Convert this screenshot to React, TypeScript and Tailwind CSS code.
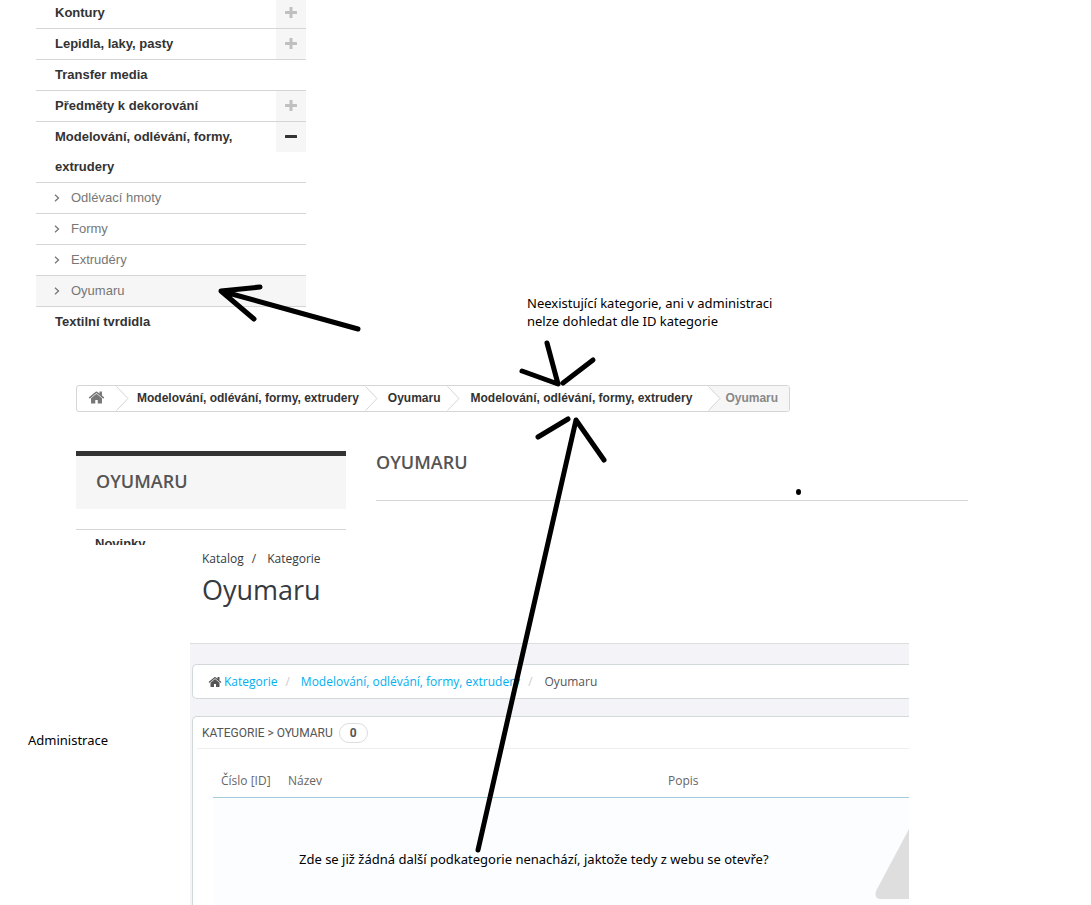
import React from 'react';
import { clsx } from 'clsx';

type Category = { name: string; toggle?: 'plus' | 'minus' };

const categories: Category[] = [
  { name: 'Kontury', toggle: 'plus' },
  { name: 'Lepidla, laky, pasty', toggle: 'plus' },
  { name: 'Transfer media' },
  { name: 'Předměty k dekorování', toggle: 'plus' },
];

const subcategories = ['Odlévací hmoty', 'Formy', 'Extrudéry', 'Oyumaru'];

const HomeIcon: React.FC<{ className?: string }> = ({ className }) => (
  <svg viewBox="0 0 1792 1792" fill="currentColor" className={className} aria-hidden="true">
    <path d="M1472 992v480q0 26-19 45t-45 19h-384v-384h-256v384h-384q-26 0-45-19t-19-45v-480q0-1 .5-3t.5-3l575-474 575 474q1 2 1 6zm223-69l-62 74q-8 9-21 11h-3q-13 0-21-7l-692-577-692 577q-12 8-24 7-13-2-21-11l-62-74q-8-10-7-23.5t11-21.5l719-599q32-26 76-26t76 26l244 204v-195q0-14 9-23t23-9h192q14 0 23 9t9 23v408l219 182q10 8 11 21.5t-7 23.5z" />
  </svg>
);

const ToggleButton: React.FC<{ kind: 'plus' | 'minus' }> = ({ kind }) => (
  <button
    type="button"
    aria-label={kind === 'plus' ? 'Rozbalit' : 'Sbalit'}
    className={clsx(
      'flex size-[30px] shrink-0 items-center justify-center bg-[#f6f6f6]',
      kind === 'plus' ? 'text-[#c0c0c0]' : 'text-[#333333]'
    )}
  >
    <svg viewBox="0 0 12 12" fill="currentColor" className="size-3" aria-hidden="true">
      <rect x="0" y="4" width="12" height="3" rx="0.5" />
      {kind === 'plus' && <rect x="4.5" y="0" width="3" height="11" rx="0.5" />}
    </svg>
  </button>
);

const CategoryRow: React.FC<Category> = ({ name, toggle }) => (
  <div className="flex items-start justify-between">
    <a href="#" className="block max-w-[220px] pl-[19px] font-bold text-[#333333]">{name}</a>
    {toggle && <ToggleButton kind={toggle} />}
  </div>
);

const Sidebar: React.FC = () => (
  <nav className="-mt-0.5 ml-9 w-[270px] text-[13px] leading-[30px]">
    <ul>
      {categories.map((category) => (
        <li key={category.name} className="border-b border-[#d6d4d4]">
          <CategoryRow {...category} />
        </li>
      ))}
      <li>
        <CategoryRow name="Modelování, odlévání, formy, extrudery" toggle="minus" />
        <ul className="border-b border-[#d6d4d4]">
          {subcategories.map((name) => (
            <li key={name} className={clsx('border-t border-[#d6d4d4]', name === 'Oyumaru' && 'bg-[#f6f6f6]')}>
              <a href="#" className="flex items-center gap-[11px] pl-[18px] text-[#777777]">
                <svg viewBox="0 0 6 8" className="h-2 w-1.5" fill="none" stroke="currentColor" strokeWidth="1.3" aria-hidden="true">
                  <path d="M1 0.8 4.5 4 1 7.2" />
                </svg>
                {name}
              </a>
            </li>
          ))}
        </ul>
      </li>
      <li>
        <CategoryRow name="Textilní tvrdidla" />
      </li>
    </ul>
  </nav>
);

const CrumbArrow: React.FC = () => (
  <svg viewBox="0 0 13 25" className="h-[25px] w-[13px] shrink-0" aria-hidden="true">
    <path d="M0 0 12 12.5 0 25Z" fill="#ffffff" />
    <path d="M0.5 0.5 12 12.5 0.5 24.5" fill="none" stroke="#d6d4d4" />
  </svg>
);

const ShopBreadcrumb: React.FC = () => (
  <nav className="mt-12 ml-[76px] flex w-fit overflow-hidden rounded-[3px] border border-[#d6d4d4] text-[12px] leading-[25px] font-bold whitespace-nowrap text-[#333333]">
    <a href="#" aria-label="Domů" className="flex h-[22px] items-center px-[11px] text-[#777777]">
      <HomeIcon className="size-[17px]" />
    </a>
    <CrumbArrow />
    <a href="#" className="pr-1.5 pl-2">Modelování, odlévání, formy, extrudery</a>
    <CrumbArrow />
    <a href="#" className="pr-1.5 pl-2.5">Oyumaru</a>
    <CrumbArrow />
    <a href="#" className="pr-4 pl-[11px]">Modelování, odlévání, formy, extrudery</a>
    <span className="flex bg-[#f6f6f6] pr-[11px] text-[#888888]">
      <CrumbArrow />
      <span className="pl-1">Oyumaru</span>
    </span>
  </nav>
);

const ShopContent: React.FC = () => (
  <div className="mt-[39px] flex h-[94px] items-start gap-[30px] overflow-hidden pr-[123px] pl-[76px]">
    <aside className="w-[270px] shrink-0">
      <h2 className="border-t-[5px] border-[#333333] bg-[#f6f6f6] px-5 pb-0.5 font-['Open_Sans',sans-serif] text-[18px] leading-[51px] font-semibold text-[#555454]">
        OYUMARU
      </h2>
      <div className="mt-5 border-t border-[#d6d4d4] pl-[19px] text-[13px] leading-7 font-bold text-[#333333]">
        <a href="#">Novinky</a>
      </div>
    </aside>
    <h1 className="grow border-b border-[#d6d4d4] pb-[27px] font-['Open_Sans',sans-serif] text-[18px] leading-[22px] font-semibold text-[#555454]">
      OYUMARU
    </h1>
  </div>
);

const AdminPanel: React.FC = () => (
  <section className="mr-[182px] ml-[190px] overflow-hidden font-['Open_Sans',sans-serif] text-[12px] text-[#666666]">
    <header className="h-[98px] pt-1 pl-3 text-[#363a41]">
      <div className="flex leading-5">
        <a href="#">Katalog</a>
        <span className="px-2">/</span>
        <a href="#" className="pl-[3px]">Kategorie</a>
      </div>
      <h2 className="text-[27px] leading-[42px]">Oyumaru</h2>
    </header>

    <div className="border-t border-[#dddddd] bg-[#f4f3f8] pt-5 pl-0.5">
      <nav className="flex h-[35px] items-center rounded-l-[5px] border border-r-0 border-[#d3d8db] bg-white pl-[15px] text-[#00aff0]">
        <HomeIcon className="size-3.5 text-[#555555]" />
        <a href="#" className="pl-0.5">Kategorie</a>
        <span className="px-2 text-[#cccccc]">/</span>
        <a href="#" className="pl-[3px]">Modelování, odlévání, formy, extrudery</a>
        <span className="px-2 text-[#cccccc]">/</span>
        <span className="pl-1 text-[#555555]">Oyumaru</span>
      </nav>

      <div className="relative mt-[17px] rounded-tl-[5px] border-t border-l border-[#d3d8db] bg-white">
        <h3 className="ml-1 flex h-8 items-center gap-1.5 border-b border-[#eeeeee] pl-[5px] font-['Roboto',sans-serif] text-[12px] leading-5 text-[#555555]">
          KATEGORIE &gt; OYUMARU
          <span className="flex h-5 w-[29px] items-center justify-center rounded-full border border-[#dddddd] font-bold">0</span>
        </h3>
        <table className="mt-4 ml-5 w-[calc(100%-20px)] table-fixed text-left">
          <thead>
            <tr className="leading-8">
              <th className="w-[67px] border-b border-b-[#a3cbdc] pl-2 font-normal">Číslo [ID]</th>
              <th className="w-[380px] border-b border-b-[#a3cbdc] pl-2 font-normal">Název</th>
              <th className="border-b border-b-[#a3cbdc] pl-2 font-normal">Popis</th>
            </tr>
          </thead>
          <tbody>
            <tr className="h-[107px] bg-[#fcfdfe]">
              <td colSpan={3} />
            </tr>
          </tbody>
        </table>
        <svg viewBox="0 0 34 70" className="absolute right-0 bottom-1.5 h-[70px] w-[34px]" aria-hidden="true">
          <path d="M34 0V70H5Q-1 69 1 62Z" fill="#dedede" />
        </svg>
      </div>
    </div>
  </section>
);

/* Hand-drawn arrows and remarks laid over the pages */
const Annotations: React.FC = () => (
  <div className="pointer-events-none absolute inset-0 font-['Noto_Sans',sans-serif] text-[13px] leading-[18px] text-black">
    <svg viewBox="0 0 1091 905" className="absolute top-0 left-0 h-[905px] w-[1091px]" fill="none" stroke="#000000" strokeWidth="5" strokeLinecap="round" strokeLinejoin="round" aria-hidden="true">
      <path d="M260 287 221 291 254 319M221 291 358 329" />
      <path d="M547 343 558 384 522 371M563 383 593 360" />
      <path d="M478 850 576 420 604 460M568 419 538 437" />
      <ellipse cx="798.5" cy="492" rx="2.5" ry="3" fill="#000000" stroke="none" />
    </svg>
    <p className="absolute top-[294px] left-[527px] whitespace-nowrap">
      Neexistující kategorie, ani v administraci
      <br />
      nelze dohledat dle ID kategorie
    </p>
    <p className="absolute top-[731px] left-7 whitespace-nowrap">Administrace</p>
    <p className="absolute top-[850px] left-[299px] whitespace-nowrap">
      Zde se již žádná další podkategorie nenachází, jaktože tedy z webu se otevře?
    </p>
  </div>
);

export default function App() {
  return (
    <main className="relative flow-root overflow-hidden bg-white font-['Liberation_Sans',Arial,sans-serif]">
      <Sidebar />
      <ShopBreadcrumb />
      <ShopContent />
      <AdminPanel />
      <Annotations />
    </main>
  );
}
